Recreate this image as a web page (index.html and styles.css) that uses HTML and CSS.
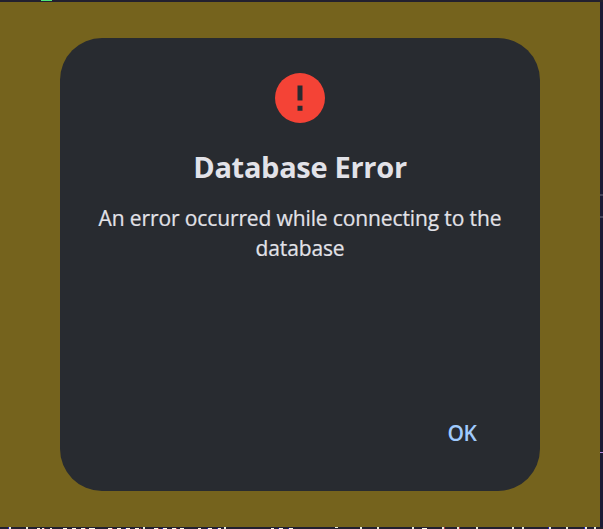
FILE: index.html
```html
<!DOCTYPE html>
<html lang="en">
<head>
<meta charset="utf-8">
<title>Database Error</title>
<link rel="stylesheet" href="styles.css">
</head>
<body>
<div class="desktop">
  <div class="top-edge"><span class="cursor"></span></div>
  <main class="window">
    <section class="dialog" role="alertdialog">
      <svg class="icon" viewBox="0 0 50 50" aria-hidden="true">
        <circle cx="25" cy="25" r="25" fill="#f44336"/>
        <path d="M22.5 12.5h5v15h-5zM22.5 32.7h5v5h-5z" fill="#282b30"/>
      </svg>
      <h1 class="title">Database Error</h1>
      <p class="message">An error occurred while connecting to the database</p>
      <div class="actions"><button class="ok">OK</button></div>
    </section>
  </main>
  <div class="side-edge"><i class="tick tick-a"></i><i class="tick tick-b"></i><i class="tick tick-c"></i></div>
  <svg class="bottom-edge" viewBox="0 0 603 2" shape-rendering="crispEdges" aria-hidden="true">
    <path fill="#e9eddf" d="M9 0h2v2h-2zM26 0h2v2h-2zM143 0h2v2h-2zM224 0h2v2h-2zM335 0h3v1h-3zM360 0h2v2h-2zM377 0h2v2h-2zM412 0h2v2h-2zM442 0h2v2h-2zM457 0h2v2h-2zM476 0h2v2h-2zM512 0h2v2h-2zM522 0h2v2h-2zM549 0h2v2h-2zM566 0h2v2h-2zM585 0h2v2h-2zM594 0h2v2h-2z"/>
    <path fill="#fffbe8" d="M37 1h3v1h-3zM42 1h2v1h-2zM50 1h2v1h-2zM63 1h4v1h-4zM72 1h4v1h-4zM81 1h4v1h-4zM89 1h6v1h-6zM108 1h4v1h-4zM117 1h4v1h-4zM126 1h4v1h-4zM135 1h4v1h-4zM154 1h4v1h-4zM163 1h4v1h-4zM172 1h4v1h-4zM180 1h4v1h-4zM198 1h3v1h-3zM208 1h4v1h-4zM218 1h3v1h-3zM271 1h3v1h-3zM279 1h4v1h-4zM289 1h4v1h-4zM422 1h5v1h-5z"/>
    <path fill="#2020b8" d="M8 0h1v2h-1zM125 1h1v1h-1zM162 1h1v1h-1zM207 1h1v1h-1zM217 1h1v1h-1zM278 1h1v1h-1zM288 1h1v1h-1zM548 0h1v2h-1zM584 0h1v2h-1z"/>
    <path fill="#a03040" d="M44 1h1v1h-1zM85 1h1v1h-1zM112 1h1v1h-1zM140 1h1v1h-1zM158 1h1v1h-1zM176 1h1v1h-1zM444 0h1v2h-1zM459 0h1v2h-1z"/>
  </svg>
</div>
</body>
</html>
```

FILE: styles.css
```css
* { box-sizing: border-box; }
body { margin: 0; background: #20202f; overflow: hidden; }
.desktop {
  display: grid;
  grid-template: 2px 525px 2px / 600px 3px;
  width: 603px;
  height: 529px;
}
.top-edge { grid-column: 1 / 3; background: #22202f; }
.cursor { display: block; width: 11px; height: 1px; margin-left: 41px; background: #50e878; }
.window { background: #75631d; padding: 36px 60px; }
.dialog {
  height: 453px;
  padding: 35px 36px 36px;
  border-radius: 42px;
  background: #282b30;
  color: #e2e2e8;
  font-family: "Segoe UI", "Open Sans", "Noto Sans", sans-serif;
  display: flex;
  flex-direction: column;
  align-items: center;
}
.icon { width: 50px; height: 50px; flex: none; }
.title { margin: 24px 0 0; font-size: 29px; line-height: 40px; font-weight: 700; letter-spacing: -0.3px; white-space: nowrap; }
.message { margin: 16px 0 0; font-size: 21px; line-height: 30px; letter-spacing: -0.12px; text-align: center; -webkit-text-stroke: 0.2px currentColor; }
.actions { margin-top: auto; width: 100%; display: flex; justify-content: flex-end; }
.ok {
  width: 84px;
  height: 44px;
  padding: 0;
  border: 0;
  background: none;
  color: #a0cafd;
  font: 600 21px/44px "Segoe UI", "Open Sans", "Noto Sans", sans-serif;
  letter-spacing: -0.4px;
}
.side-edge { background: #1b1b36; display: flex; flex-direction: column; }
.tick { height: 2px; background: #44445c; }
.tick-a { margin-top: 192px; }
.tick-b { margin-top: 20px; }
.tick-c { margin-top: 234px; height: 1px; background: #b58ae0; }
.bottom-edge { grid-column: 1 / 3; width: 603px; height: 2px; display: block; background: #22202f; }
```
